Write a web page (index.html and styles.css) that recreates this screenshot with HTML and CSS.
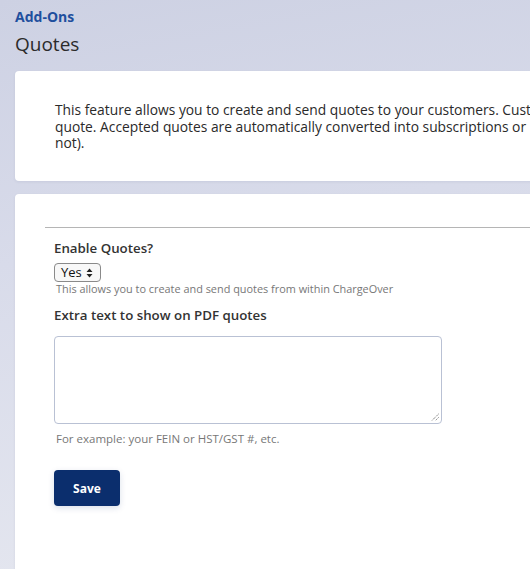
FILE: index.html
```html
<!DOCTYPE html>
<html>
<head>
<meta charset="utf-8">
<link rel="stylesheet" href="styles.css">
</head>
<body>
<div class="page">
  <div class="crumb">Add-Ons</div>
  <h1 class="title">Quotes</h1>
  <div class="card intro">
    <p>This feature allows you to create and send quotes to your customers. Customers can view, accept or reject the<br>quote. Accepted quotes are automatically converted into subscriptions or invoices (depending on if they are recurring or<br>not).</p>
  </div>
  <div class="card form-card">
    <hr class="rule">
    <form class="form">
      <label class="label">Enable Quotes?</label>
      <div class="select">Yes <svg class="arrows" width="7" height="10" viewBox="0 0 7 10"><path d="M3.5 0.5 L6.5 4 H0.5 Z M3.5 9.5 L6.5 6 H0.5 Z" fill="#222"/></svg></div>
      <div class="help">This allows you to create and send quotes from within ChargeOver</div>
      <label class="label second">Extra text to show on PDF quotes</label>
      <div class="textarea"><svg class="grip" width="8" height="8" viewBox="0 0 8 8"><path d="M7.5 1 L1 7.5 M7.5 4.5 L4.5 7.5" stroke="#555" stroke-width="1" stroke-dasharray="1 1"/></svg></div>
      <div class="help example">For example: your FEIN or HST/GST #, etc.</div>
      <button type="button" class="save">Save</button>
    </form>
  </div>
</div>
</body>
</html>
```
FILE: styles.css
```css
html, body {
  margin: 0;
  padding: 0;
  height: 100%;
  overflow: hidden;
}
body {
  background: linear-gradient(170deg, #cdd1e3 0%, #d8dbea 40%, #e6e8f0 100%);
  font-family: "Open Sans", "DejaVu Sans", sans-serif;
  color: #333;
}
.page {
  padding: 8px 0 0 15px;
  width: 760px;
}
.crumb {
  font-size: 14px;
  font-weight: 700;
  color: #1f4f9e;
  line-height: 17px;
}
.title {
  margin: 7px 0 0 0;
  font-size: 19px;
  font-weight: 400;
  color: #2b2b2b;
  line-height: 24px;
}
.card {
  background: #fff;
  border-radius: 4px;
  box-shadow: 0 1px 3px rgba(40, 50, 90, 0.08);
}
.intro {
  margin-top: 15px;
  height: 110px;
  box-sizing: border-box;
  padding: 31px 40px 0 40px;
}
.intro p {
  margin: 0;
  font-size: 13.8px;
  line-height: 16.5px;
  white-space: nowrap;
  color: #2a2a2a;
}
.form-card {
  margin-top: 13px;
  height: 400px;
  padding: 33px 0 0 30px;
  box-sizing: border-box;
}
.rule {
  margin: 0;
  border: 0;
  border-top: 1px solid #b5b5b5;
}
.form {
  padding: 11px 0 0 9px;
  display: flex;
  flex-direction: column;
  align-items: flex-start;
}
.label {
  font-size: 13.3px;
  font-weight: 600;
  color: #333;
  line-height: 18px;
}
.second {
  margin-top: 10px;
}
.select {
  margin-top: 6px;
  box-sizing: border-box;
  width: 47px;
  height: 19px;
  border: 1px solid #8a8a8a;
  border-radius: 4px;
  background: #f8f8f8;
  font-size: 13px;
  line-height: 17px;
  padding-left: 6px;
  display: flex;
  align-items: center;
  gap: 4px;
  color: #111;
}
.help {
  font-size: 10.9px;
  color: #777;
  line-height: 14px;
  margin-left: 2px;
}
.textarea {
  margin-top: 12px;
  box-sizing: border-box;
  width: 388px;
  height: 88px;
  border: 1px solid #b9c1d4;
  border-radius: 4px;
  position: relative;
  background: #fff;
}
.grip {
  position: absolute;
  right: 2px;
  bottom: 2px;
}
.example {
  margin-top: 8px;
  font-size: 11.5px;
}
.save {
  margin-top: 24px;
  width: 66px;
  height: 36px;
  border: 0;
  border-radius: 4px;
  background: #0b2e6d;
  color: #fff;
  font-family: "Open Sans", sans-serif;
  font-size: 12px;
  font-weight: 700;
  box-shadow: 0 2px 6px rgba(11, 46, 109, 0.15);
}
```
